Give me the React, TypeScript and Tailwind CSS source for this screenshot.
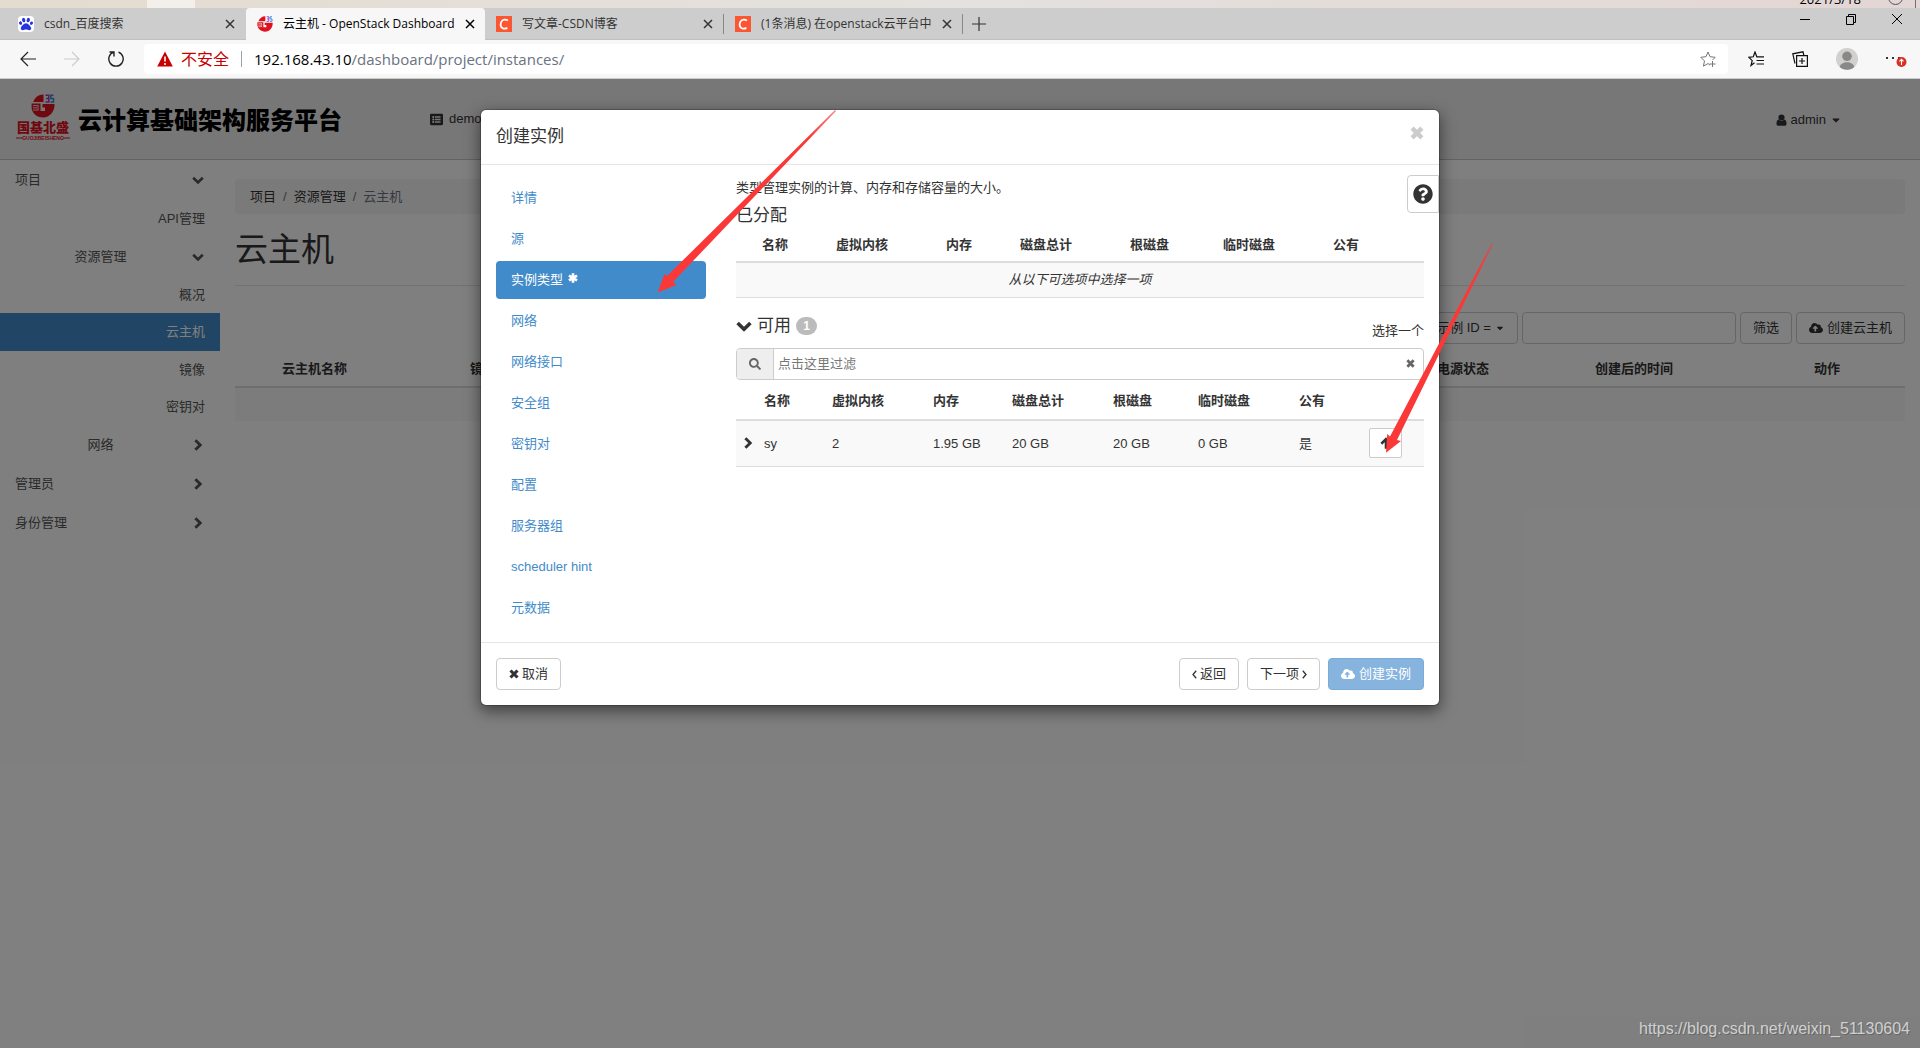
import type { ReactNode } from 'react';
import {
  FaCaretDown,
  FaCloudUploadAlt,
  FaListAlt,
  FaPaw,
  FaQuestionCircle,
  FaSearch,
} from 'react-icons/fa';

interface BrowserTab {
  title: string;
  icon: 'baidu' | 'openstack' | 'csdn';
  active?: boolean;
  divider?: boolean;
}

const tabs: BrowserTab[] = [
  { title: 'csdn_百度搜索', icon: 'baidu' },
  { title: '云主机 - OpenStack Dashboard', icon: 'openstack', active: true },
  { title: '写文章-CSDN博客', icon: 'csdn', divider: true },
  { title: '(1条消息) 在openstack云平台中，', icon: 'csdn', divider: true },
];

const wizardSteps = [
  '详情', '源', '实例类型', '网络', '网络接口', '安全组',
  '密钥对', '配置', '服务器组', 'scheduler hint', '元数据',
];

const flavorColumns = ['名称', '虚拟内核', '内存', '磁盘总计', '根磁盘', '临时磁盘', '公有'];

const flavor = ['sy', '2', '1.95 GB', '20 GB', '20 GB', '0 GB', '是'];

interface IconProps {
  className: string;
}

// Heavy stroke icons, thicker than the ones in the icon package
function ChevronDown({ className }: IconProps) {
  return (
    <svg viewBox="0 0 16 16" className={className} fill="none" stroke="currentColor" strokeWidth="3.6" aria-hidden="true">
      <path d="M1.6 5 L8 11.2 L14.4 5" />
    </svg>
  );
}

function ChevronRight({ className }: IconProps) {
  return (
    <svg viewBox="0 0 16 16" className={className} fill="none" stroke="currentColor" strokeWidth="3.8" aria-hidden="true">
      <path d="M4.5 1.6 L11 8 L4.5 14.4" />
    </svg>
  );
}

function Cross({ className }: IconProps) {
  return (
    <svg viewBox="0 0 16 16" className={className} fill="none" stroke="currentColor" strokeWidth="5" aria-hidden="true">
      <path d="M2.4 2.4 L13.6 13.6 M13.6 2.4 L2.4 13.6" />
    </svg>
  );
}

function Asterisk({ className }: IconProps) {
  return (
    <svg viewBox="0 0 16 16" className={className} fill="none" stroke="currentColor" strokeWidth="4.2" aria-hidden="true">
      <path d="M8 0.5 V15.5 M1.5 4.2 L14.5 11.8 M14.5 4.2 L1.5 11.8" />
    </svg>
  );
}

function ArrowUp({ className }: IconProps) {
  return (
    <svg viewBox="0 0 16 16" className={className} fill="none" stroke="currentColor" strokeWidth="3.4" aria-hidden="true">
      <path d="M8 3 V15.5 M1.8 9 L8 2.8 L14.2 9" />
    </svg>
  );
}

function UserIcon({ className }: IconProps) {
  return (
    <svg viewBox="0 0 14 16" className={className} fill="currentColor" aria-hidden="true">
      <circle cx="7" cy="4.6" r="4.1" />
      <path d="M3.2 7.4 C1 8 0.3 10.6 0.3 13 C0.3 14.8 1.4 15.8 3 15.8 H11 C12.6 15.8 13.7 14.8 13.7 13 C13.7 10.6 13 8 10.8 7.4 C8.8 9.8 5.2 9.8 3.2 7.4 Z" />
    </svg>
  );
}

function Angle({ d }: { d: string }) {
  return (
    <svg viewBox="0 0 5 9" className="h-[9px] w-[5px]" fill="none" stroke="currentColor" strokeWidth="1.3" aria-hidden="true">
      <path d={d} />
    </svg>
  );
}

// Round "G" emblem, used as favicon and in the header logo
function Emblem({ className }: IconProps) {
  return (
    <svg viewBox="0 0 24 24" className={className} aria-hidden="true">
      <path d="M12.5 0.5 V8 H2.2 C3.6 3.6 7.4 0.5 12.5 0.5 Z" fill="#e0111f" />
      <path d="M0.6 9.5 H9.5 V17 H14 V13.5 H11.5 V10 H23.5 C24 17 19 23.5 12 23.5 C6 23.5 1.2 19.5 0.6 14 Z" fill="#e0111f" />
      <path d="M2 11.6 H7.5 M2 13.8 H6 M2 16 H7.5 M7 11.6 V16" stroke="#efefef" strokeWidth="0.9" />
      <path d="M14.5 1.2 H17.8 V4.5 H15 M17.8 4.5 V8 H14.5" stroke="#a33fc0" strokeWidth="1.5" fill="none" />
      <path d="M22.5 1.2 H19.8 V4.5 H22.5 V8 H19.5" stroke="#2f8fd8" strokeWidth="1.5" fill="none" />
    </svg>
  );
}

function TabIcon({ icon }: { icon: BrowserTab['icon'] }) {
  if (icon === 'openstack') return <Emblem className="size-4 shrink-0" />;
  if (icon === 'baidu') {
    return (
      <span className="flex size-4 shrink-0 items-center justify-center rounded-sm bg-white text-[#2932e1]">
        <FaPaw className="size-[14px]" />
      </span>
    );
  }
  return (
    <svg viewBox="0 0 16 16" className="size-4 shrink-0" aria-hidden="true">
      <rect width="16" height="16" fill="#fc5531" />
      <path d="M12 4.6 C8.5 2.4 4.9 4 4.6 8.3 C4.5 12.2 8 13.6 11.4 11.9" fill="none" stroke="#fff" strokeWidth="1.8" />
    </svg>
  );
}

function DesktopStrip() {
  return (
    <div className="flex h-2 shrink-0 overflow-hidden bg-linear-to-r from-[#e5dcd0] via-[#e4e1de] to-[#e3d6d4]">
      <div className="ml-[147px] w-12 bg-[#f3f0ec]" />
      <div className="ml-auto flex pr-1">
        <span className="-mt-[9px] mr-[27px] text-[13px] leading-4 text-black">2021/3/18</span>
        <span className="-mt-[10px] mr-3 size-[15px] rounded-full border border-gray-600" />
        <span className="h-2 w-px bg-gray-500" />
      </div>
    </div>
  );
}

function TabBar() {
  return (
    <div className="flex h-8 shrink-0 bg-[#cdcdcd] pl-[7px] shadow-[inset_0_-1px_0_#c0c0c0]">
      {tabs.map((tab) => (
        <div
          key={tab.title}
          className={
            tab.active
              ? 'flex w-[239px] items-center gap-[10px] rounded-t bg-[#f7f7f7] pr-[10px] pl-[11px] text-black'
              : 'flex w-[239px] items-center gap-[10px] pl-[11px] text-[#333]'
          }
        >
          <TabIcon icon={tab.icon} />
          <span className="min-w-0 flex-1 overflow-hidden text-xs whitespace-nowrap">{tab.title}</span>
          <button aria-label="关闭标签页" className="shrink-0">
            <svg viewBox="0 0 10 10" className="size-[10px]" fill="none" stroke="currentColor" strokeWidth="1.5">
              <path d="M1 1 L9 9 M9 1 L1 9" />
            </svg>
          </button>
          {!tab.active && <span className={tab.divider ? 'h-5 w-px bg-[#888]' : 'h-5 w-px'} />}
        </div>
      ))}
      <button aria-label="新建标签页" className="ml-[9px]">
        <svg viewBox="0 0 14 14" className="size-[14px]" stroke="#333" strokeWidth="1.2">
          <path d="M7 0 V14 M0 7 H14" />
        </svg>
      </button>
      <div className="mr-[17px] ml-auto flex h-[22px] items-center gap-[34px]">
        <button aria-label="最小化">
          <svg viewBox="0 0 12 12" className="size-3" stroke="#000"><path d="M1 6.5 H11" /></svg>
        </button>
        <button aria-label="还原">
          <svg viewBox="0 0 12 12" className="size-3" stroke="#000" fill="none">
            <path d="M1.5 3.5 H8.5 V11.5 H1.5 Z M3.5 3 V1.5 H10.5 V9.5 H9" />
          </svg>
        </button>
        <button aria-label="关闭">
          <svg viewBox="0 0 12 12" className="size-3" stroke="#000"><path d="M1 1 L11 11 M11 1 L1 11" /></svg>
        </button>
      </div>
    </div>
  );
}

function AddressBar() {
  return (
    <div className="flex h-[39px] shrink-0 items-center border-b border-[#ccc] bg-[#f7f7f7] pl-5">
      <button aria-label="后退">
        <svg viewBox="0 0 16 16" className="size-4" fill="none" stroke="#222" strokeWidth="1.2">
          <path d="M16 8 H1 M8 1 L1 8 L8 15" />
        </svg>
      </button>
      <button aria-label="前进" className="ml-7">
        <svg viewBox="0 0 16 16" className="size-4" fill="none" stroke="#ccc" strokeWidth="1.2">
          <path d="M0 8 H15 M8 1 L15 8 L8 15" />
        </svg>
      </button>
      <button aria-label="刷新" className="ml-7">
        <svg viewBox="0 0 16 16" className="size-4" fill="none" stroke="#222" strokeWidth="1.4">
          <path d="M5.5 1.2 A7.2 7.2 0 1 0 10.5 1.2 M1.5 1 H6 V5.5" />
        </svg>
      </button>
      <div className="ml-5 flex h-[30px] min-w-0 flex-1 items-center rounded bg-white pr-3 pl-[13px]">
        <svg viewBox="0 0 16 16" className="size-4 shrink-0" aria-hidden="true">
          <path d="M8 0.5 L15.8 15.5 H0.2 Z" fill="#c80000" />
          <path d="M8 5.5 V10.5 M8 12 V14" stroke="#fff" strokeWidth="1.6" />
        </svg>
        <span className="ml-2 text-base whitespace-nowrap text-[#c80000]">不安全</span>
        <span className="mx-3 h-4 w-px bg-gray-400" />
        <span className="min-w-0 flex-1 text-[15px] text-gray-500">
          <span className="text-black">192.168.43.10</span>/dashboard/project/instances/
        </span>
        <button aria-label="收藏此页">
          <svg viewBox="0 0 16 16" className="size-4" fill="none" stroke="#777">
            <path d="M10 14.2 L8 12.5 L3.4 15.2 L4.5 10 L0.8 6.3 L6 5.7 L8 1 L10 5.7 L15.2 6.3 L12.5 9 M12.5 10 V16 M9.5 13 H15.5" />
          </svg>
        </button>
      </div>
      <div className="ml-5 flex items-center gap-7 pr-3">
        <button aria-label="收藏夹">
          <svg viewBox="0 0 16 16" className="size-4" fill="none" stroke="#111" strokeWidth="1.2">
            <path d="M6.5 11.8 L3 14.5 L4.2 9.6 L0.8 6.3 L5.3 5.8 L7 1 L8.8 5.8 H16 M8.5 9.5 H16 M8.5 13 H16" />
          </svg>
        </button>
        <button aria-label="集锦">
          <svg viewBox="0 0 16 16" className="size-4" fill="none" stroke="#111" strokeWidth="1.2">
            <path d="M4.6 4.6 H15.4 V15.4 H4.6 Z M10 7 V13 M7 10 H13 M3 12.5 L0.8 2.8 L11 0.8 L11.8 4" />
          </svg>
        </button>
        <button aria-label="用户配置">
          <svg viewBox="0 0 22 22" className="size-[22px]">
            <circle cx="11" cy="11" r="11" fill="#d2d0ce" />
            <circle cx="11" cy="8.3" r="4.8" fill="#8a8886" />
            <path d="M3.8 19 C5 12.8 17 12.8 18.2 19 C14.5 22.7 7.5 22.7 3.8 19 Z" fill="#8a8886" />
          </svg>
        </button>
        <button aria-label="设置及其他">
          <svg viewBox="0 0 22 16" className="h-4 w-[22px]">
            <path d="M0 7 H2 M6 7 H8 M12 7 H14" stroke="#333" strokeWidth="2" />
            <circle cx="15.5" cy="11" r="5" fill="#d93025" />
            <path d="M15.5 14 V8.5 M13.5 10.3 L15.5 8.3 L17.5 10.3" stroke="#fff" strokeWidth="1.1" fill="none" />
          </svg>
        </button>
      </div>
    </div>
  );
}

function PageHeader() {
  return (
    <header className="flex h-[81px] shrink-0 items-center border-b border-[#c4c4c4] bg-[#efefef] pl-4">
      <div className="-mt-1 flex w-[54px] flex-col items-center">
        <Emblem className="size-6" />
        <span className="mt-[3px] text-[13px] leading-[14px] font-black whitespace-nowrap text-[#e0111f]">国基北盛</span>
        <svg viewBox="0 0 54 6" className="h-[6px] w-[54px]" aria-hidden="true">
          <path d="M0 3 H7 M47 3 H54" stroke="#e0111f" />
          <text x="27" y="5" textAnchor="middle" fontSize="5" fontWeight="700" fill="#e0111f">GUOJIBEISHENG</text>
        </svg>
      </div>
      <h2 className="mt-1 ml-2 text-2xl font-black whitespace-nowrap text-black">云计算基础架构服务平台</h2>
      <a href="#project" className="ml-[88px] flex items-center gap-[6px] text-[#333]">
        <FaListAlt className="size-[13px]" />
        demo
      </a>
      <a href="#user" className="mt-[2px] mr-[78px] ml-auto flex items-center gap-1 text-[#333]">
        <UserIcon className="h-3 w-[11px]" />
        admin
        <FaCaretDown className="size-3" />
      </a>
    </header>
  );
}

function NavGroup({ label, open, nested }: { label: string; open?: boolean; nested?: boolean }) {
  return (
    <button
      className={
        nested
          ? 'flex h-[39px] w-full items-center justify-between pr-4 pl-[9px]'
          : 'flex h-[39px] w-full items-center justify-between pr-4 pl-[15px]'
      }
    >
      <span className={nested ? 'flex-1 text-center' : ''}>{label}</span>
      {open ? <ChevronDown className="size-3" /> : <ChevronRight className="size-3" />}
    </button>
  );
}

function NavLeaf({ label, active }: { label: string; active?: boolean }) {
  return (
    <a
      href="#nav"
      className={
        active
          ? 'flex h-[38px] items-center justify-end bg-[#428bca] pr-[15px] text-white'
          : 'flex h-[37px] items-center justify-end pr-[15px]'
      }
    >
      {label}
    </a>
  );
}

function Sidebar() {
  return (
    <nav className="w-[220px] shrink-0 text-[#555]">
      <NavGroup label="项目" open />
      <div className="pt-px">
        <NavLeaf label="API管理" />
      </div>
      <NavGroup label="资源管理" open nested />
      <NavLeaf label="概况" />
      <NavLeaf label="云主机" active />
      <NavLeaf label="镜像" />
      <NavLeaf label="密钥对" />
      <NavGroup label="网络" nested />
      <NavGroup label="管理员" />
      <NavGroup label="身份管理" />
    </nav>
  );
}

function InstancesPage() {
  return (
    <main className="min-w-0 flex-1 pt-[19px] pr-[15px] pl-[15px] text-[#333]">
      <ol className="flex h-[35px] items-center gap-[7px] rounded bg-[#f5f5f5] px-[15px]">
        <li><a href="#project">项目</a></li>
        <li className="text-gray-500">/</li>
        <li><a href="#compute">资源管理</a></li>
        <li className="text-gray-500">/</li>
        <li className="text-gray-500">云主机</li>
      </ol>
      <h1 className="mt-4 border-b border-[#e4e4e4] pb-[15px] text-[33px] leading-10">云主机</h1>
      <div className="mt-[26px] flex h-8 justify-end gap-1">
        <button className="flex items-center gap-1 rounded border border-[#ccc] px-3">
          示例 ID = <FaCaretDown className="size-[10px]" />
        </button>
        <input aria-label="过滤条件" className="w-[214px] rounded border border-[#ccc] px-3" />
        <button className="rounded border border-[#ccc] px-3">筛选</button>
        <button className="flex items-center gap-1 rounded border border-[#ccc] px-3">
          <FaCloudUploadAlt className="size-[14px]" />
          创建云主机
        </button>
      </div>
      <table className="mt-2 w-full table-fixed text-left">
        <thead>
          <tr className="h-[35px] border-b-2 border-[#ddd]">
            <th className="w-[39px]" />
            <th className="w-[188px] px-2">云主机名称</th>
            <th className="px-2">镜像名称</th>
            <th className="w-[158px] px-2">电源状态</th>
            <th className="w-[219px] px-2">创建后的时间</th>
            <th className="w-[99px] px-2">动作</th>
          </tr>
        </thead>
        <tbody>
          <tr className="h-[34px] bg-[#f9f9f9]">
            <td colSpan={6} />
          </tr>
        </tbody>
      </table>
    </main>
  );
}

function ColumnHeads() {
  return (
    <>
      {flavorColumns.map((name) => (
        <th key={name} className="px-2">{name}</th>
      ))}
    </>
  );
}

function AllocatedTable() {
  return (
    <table className="w-full table-fixed text-left">
      <colgroup>
        <col className="w-[18px]" />
        <col className="w-[74px]" />
        <col className="w-[110px]" />
        <col className="w-[74px]" />
        <col className="w-[110px]" />
        <col className="w-[93px]" />
        <col className="w-[110px]" />
        <col />
      </colgroup>
      <thead>
        <tr className="h-[34px] border-b-2 border-[#ddd]">
          <th />
          <ColumnHeads />
        </tr>
      </thead>
      <tbody>
        <tr className="h-[35px] border-b border-[#ddd] bg-[#f9f9f9]">
          <td colSpan={8} className="text-center italic">从以下可选项中选择一项</td>
        </tr>
      </tbody>
    </table>
  );
}

function AvailableTable() {
  return (
    <table className="mt-1 w-full table-fixed text-left">
      <colgroup>
        <col className="w-5" />
        <col className="w-[68px]" />
        <col className="w-[101px]" />
        <col className="w-[79px]" />
        <col className="w-[101px]" />
        <col className="w-[85px]" />
        <col className="w-[101px]" />
        <col className="w-[70px]" />
        <col />
      </colgroup>
      <thead>
        <tr className="h-9 border-b-2 border-[#ddd]">
          <th />
          <ColumnHeads />
          <th />
        </tr>
      </thead>
      <tbody>
        <tr className="h-[47px] border-b border-[#ddd] bg-[#f9f9f9]">
          <td className="pl-[6px]"><ChevronRight className="size-3" /></td>
          {flavor.map((value, i) => (
            <td key={flavorColumns[i]} className="px-2">{value}</td>
          ))}
          <td className="px-2">
            <button aria-label="分配" className="flex h-[30px] w-[33px] items-center justify-center rounded-xs border border-[#ccc] bg-white">
              <ArrowUp className="size-3" />
            </button>
          </td>
        </tr>
      </tbody>
    </table>
  );
}

function FooterButton({ children }: { children: ReactNode }) {
  return (
    <button className="flex h-8 items-center gap-[3px] rounded border border-[#ccc] bg-white px-3 text-[#333]">
      {children}
    </button>
  );
}

// Red pointers lying over the dialog
function Pointers() {
  return (
    <>
      <svg viewBox="0 0 180 184" className="pointer-events-none absolute top-0 left-[176px] h-[184px] w-[180px]" aria-hidden="true">
        <defs>
          <linearGradient id="fade-a" x1="1" y1="0" x2="0" y2="1">
            <stop offset="0" stopColor="#fb3838" stopOpacity="0.6" />
            <stop offset="0.15" stopColor="#fb3838" />
          </linearGradient>
        </defs>
        <path d="M178 0 L10 166 L7.5 164 L0.7 182.5 L19.5 175 L16 172 L179 1 Z" fill="url(#fade-a)" />
      </svg>
      <svg viewBox="0 0 110 212" className="pointer-events-none absolute top-[133px] left-[904px] h-[212px] w-[110px]" aria-hidden="true">
        <defs>
          <linearGradient id="fade-b" x1="1" y1="0" x2="0.3" y2="1">
            <stop offset="0" stopColor="#fb3838" stopOpacity="0.6" />
            <stop offset="0.15" stopColor="#fb3838" />
          </linearGradient>
        </defs>
        <path d="M107 0 L5 193.5 L2.2 191 L1 209.7 L16 198 L12 197 L108 1 Z" fill="url(#fade-b)" />
      </svg>
    </>
  );
}

function LaunchDialog() {
  return (
    <div
      role="dialog"
      aria-label="创建实例"
      className="relative w-1/2 rounded-md border border-black/20 bg-white bg-clip-padding text-[#333] shadow-[0_5px_15px_rgba(0,0,0,0.5)]"
    >
      <div className="flex h-[55px] justify-between border-b border-[#e5e5e5] px-[15px] pt-[15px]">
        <h4 className="text-[17px] leading-6">创建实例</h4>
        <button aria-label="关闭" className="flex h-4 items-center text-[#ccc]"><Cross className="size-[14px]" /></button>
      </div>

      <div className="relative flex px-[15px] pt-[14px] pb-[15px]">
        <ul className="flex w-[210px] shrink-0 flex-col gap-[3px]">
          {wizardSteps.map((step) => (
            <li key={step}>
              {step === '实例类型' ? (
                <a href="#step" className="flex h-[38px] items-center gap-[5px] rounded bg-[#428bca] px-[15px] text-white">
                  {step}
                  <Asterisk className="mb-1 size-[10px]" />
                </a>
              ) : (
                <a href="#step" className="flex h-[38px] items-center px-[15px] text-[#428bca]">{step}</a>
              )}
            </li>
          ))}
        </ul>

        <div className="ml-[30px] min-w-0 flex-1">
          <p className="pt-px leading-4">类型管理实例的计算、内存和存储容量的大小。</p>
          <h4 className="mt-2 text-[17px] leading-6">已分配</h4>
          <AllocatedTable />
          <div className="mt-4 flex h-6 items-center">
            <ChevronDown className="size-4" />
            <h4 className="ml-[5px] text-[17px] leading-6">可用</h4>
            <span className="ml-[5px] flex h-[18px] w-[21px] items-center justify-center rounded-full bg-[#bbb] text-xs font-bold text-white">1</span>
            <span className="ml-auto self-end leading-[14px]">选择一个</span>
          </div>
          <div className="mt-[10px] flex h-8 items-center overflow-hidden rounded border border-[#ccc]">
            <label htmlFor="flavor-filter" aria-label="过滤" className="flex h-full w-[37px] items-center justify-center border-r border-[#ccc] bg-[#eee] text-[#666]">
              <FaSearch className="size-3" />
            </label>
            <input id="flavor-filter" placeholder="点击这里过滤" className="min-w-0 flex-1 px-1 outline-none placeholder:text-[#777]" />
            <button aria-label="清除" className="pr-2 text-[#666]"><Cross className="size-[9px]" /></button>
          </div>
          <AvailableTable />
        </div>

        <button aria-label="帮助" className="absolute top-[10px] right-0 flex h-[38px] w-8 items-center justify-center rounded-l border border-[#ccc] bg-white">
          <FaQuestionCircle className="size-5" />
        </button>
      </div>

      <div className="flex border-t border-[#e5e5e5] p-[15px]">
        <FooterButton>
          <Cross className="size-[10px]" />
          取消
        </FooterButton>
        <div className="ml-auto flex gap-2">
          <FooterButton>
            <Angle d="M4.2 0.8 L1 4.5 L4.2 8.2" />
            返回
          </FooterButton>
          <FooterButton>
            下一项
            <Angle d="M0.8 0.8 L4 4.5 L0.8 8.2" />
          </FooterButton>
          <button disabled className="flex h-8 items-center gap-1 rounded border border-[#7bacd9] bg-[#86b4de] px-3 text-white">
            <FaCloudUploadAlt className="size-[14px]" />
            创建实例
          </button>
        </div>
      </div>

      <Pointers />
    </div>
  );
}

export default function App() {
  return (
    <div className="flex min-h-screen flex-col bg-white">
      <div className="font-['Open_Sans','Noto_Sans_CJK_SC',sans-serif]">
        <DesktopStrip />
        <TabBar />
        <AddressBar />
      </div>
      <div className="relative flex flex-1 flex-col font-['Liberation_Sans','Noto_Sans_CJK_SC',sans-serif] text-[13px]">
        <PageHeader />
        <div className="flex">
          <Sidebar />
          <InstancesPage />
        </div>
        <div className="absolute inset-0 flex items-start justify-center bg-black/50 pt-[30px]">
          <LaunchDialog />
        </div>
        <span className="absolute right-[10px] bottom-[7px] text-base text-[#d0d0d0] [text-shadow:1px_1px_0_#666]">
          https://blog.csdn.net/weixin_51130604
        </span>
      </div>
    </div>
  );
}
